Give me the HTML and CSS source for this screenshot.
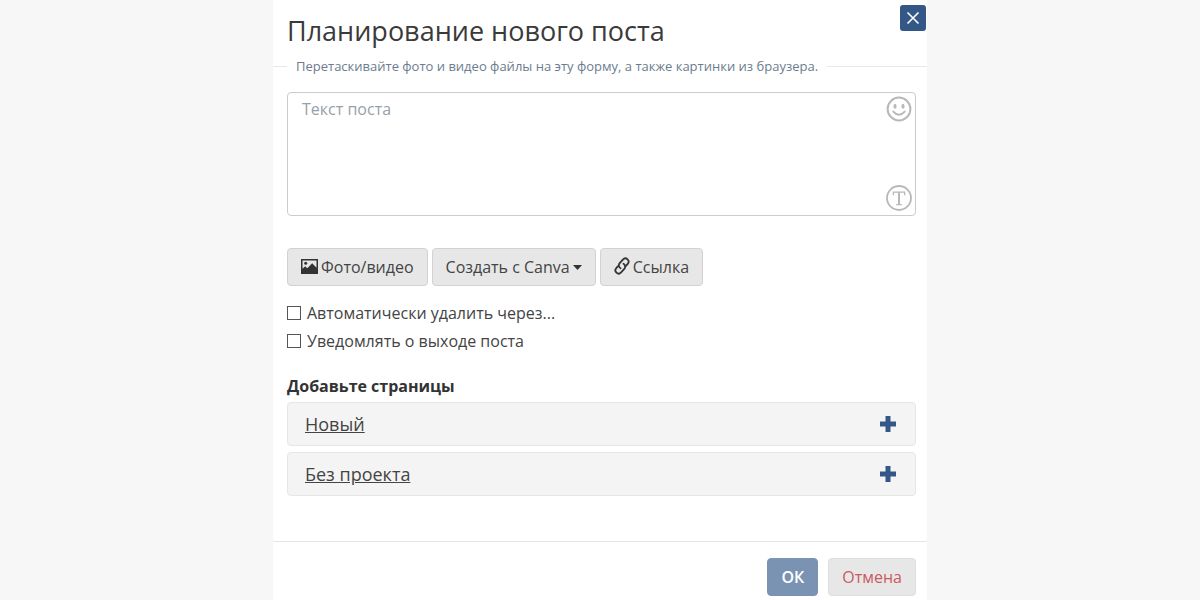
FILE: index.html
```html
<!DOCTYPE html>
<html lang="ru">
<head>
<meta charset="utf-8">
<meta name="viewport" content="width=device-width, initial-scale=1">
<title>Планирование нового поста</title>
<link rel="stylesheet" href="styles.css">
</head>
<body>
<form class="dialog">
  <header class="header">
    <h1 class="title">Планирование нового поста</h1>
    <button class="close" type="button" aria-label="Закрыть">
      <svg width="14" height="14" viewBox="0 0 14 14"><path d="M1.500 1.500l11 11M12.500 1.500l-11 11" fill="none" stroke="currentColor" stroke-width="1.600"/></svg>
    </button>
  </header>
  <p class="hint">Перетаскивайте фото и видео файлы на эту форму, а также картинки из браузера.</p>

  <div class="content">
    <div class="editor">
      <textarea class="editor-text" placeholder="Текст поста" aria-label="Текст поста"></textarea>
      <div class="editor-tools">
        <button class="tool" type="button" aria-label="Смайлики">
          <svg width="26" height="26" viewBox="0 0 26 26"><circle cx="13" cy="13" r="11.400" fill="none" stroke="currentColor" stroke-width="2"/><ellipse cx="9" cy="10.300" rx="1.500" ry="2.500" fill="currentColor"/><ellipse cx="17" cy="10.300" rx="1.500" ry="2.500" fill="currentColor"/><path d="M7.300 15.600q5.700 6.200 11.400 0" fill="none" stroke="currentColor" stroke-width="2" stroke-linecap="round"/></svg>
        </button>
        <button class="tool" type="button" aria-label="Форматирование текста">
          <svg width="26" height="26" viewBox="0 0 26 26"><circle cx="13" cy="13" r="12" fill="none" stroke="currentColor" stroke-width="1.800"/><path d="M7.400 10.300V7.200h11.200v3.100M10.200 19.600h5.600" fill="none" stroke="currentColor" stroke-width="1.300"/><path d="M13 7.200v12" stroke="currentColor" stroke-width="2"/></svg>
        </button>
      </div>
    </div>

    <div class="actions">
      <button class="button" type="button">
        <svg width="17" height="16" viewBox="0 0 17 16"><path fill="currentColor" fill-rule="evenodd" d="M0 0h17v15H0zM1.500 1.500v8.300l2.700-2.600 2 2 1.600-1.400 3.400-3.500 4.300 4.500V1.500z"/><circle cx="4.700" cy="4.300" r="1.500" fill="currentColor"/></svg>
        <span>Фото/видео</span>
      </button>
      <button class="button" type="button">
        <span>Создать с Canva</span>
        <svg width="9" height="5" viewBox="0 0 9 5"><path d="M0 0h9L4.500 5z" fill="currentColor"/></svg>
      </button>
      <button class="button" type="button">
        <svg width="16" height="20" viewBox="0 0 16 20"><g fill="none" stroke="currentColor" stroke-width="1.800" stroke-linecap="round" stroke-linejoin="round"><path d="M6.500 11.200C4.500 10 4.400 7.600 5.700 6.100L8.900 2.600C10.200 1.200 12.200 1.100 13.500 2.300S14.900 5.500 13.700 6.900L12 8.800"/><path d="M9.500 6.800C11.500 8 11.600 10.400 10.300 11.900L7.100 15.400C5.800 16.800 3.800 16.900 2.500 15.700S1.100 12.500 2.300 11.100L4 9.200"/></g></svg>
        <span>Ссылка</span>
      </button>
    </div>

    <div class="options">
      <label class="option"><input class="check" type="checkbox"><span>Автоматически удалить через...</span></label>
      <label class="option"><input class="check" type="checkbox"><span>Уведомлять о выходе поста</span></label>
    </div>

    <h2 class="subtitle">Добавьте страницы</h2>
    <div class="projects">
      <div class="project">
        <a class="project-name" href="#new">Новый</a>
        <button class="add" type="button" aria-label="Добавить: Новый"><svg width="16" height="16" viewBox="0 0 16 16"><path d="M5.500 0h5v5.500H16v5h-5.500V16h-5v-5.500H0v-5h5.500z" fill="currentColor"/></svg></button>
      </div>
      <div class="project">
        <a class="project-name" href="#none">Без проекта</a>
        <button class="add" type="button" aria-label="Добавить: Без проекта"><svg width="16" height="16" viewBox="0 0 16 16"><path d="M5.500 0h5v5.500H16v5h-5.500V16h-5v-5.500H0v-5h5.500z" fill="currentColor"/></svg></button>
      </div>
    </div>
  </div>

  <footer class="footer">
    <button class="button primary" type="submit">ОК</button>
    <button class="button cancel" type="button">Отмена</button>
  </footer>
</form>
</body>
</html>
```
FILE: styles.css
```css
* {
  box-sizing: border-box;
}

body {
  margin: 0;
  background: #f7f7f7;
  color: #444;
  font: 16px/24px "Open Sans", "Noto Sans", sans-serif;
}

svg {
  display: block;
  flex: none;
}

button {
  font: inherit;
  cursor: pointer;
}

.dialog {
  display: flex;
  flex-direction: column;
  max-width: 654px;
  min-height: 100vh;
  margin: 0 auto;
  background: #fff;
}

.header {
  display: flex;
  justify-content: space-between;
  align-items: flex-start;
  padding: 5px 1px 0 14px;
}

.title {
  margin: 8px 0 0;
  font-size: 27px;
  line-height: 36px;
  font-weight: 400;
  color: #3a3a3a;
}

.close {
  display: grid;
  place-items: center;
  width: 26px;
  height: 26px;
  padding: 0;
  border: 0;
  border-radius: 3px;
  background: #335887;
  color: #fff;
}

.hint {
  display: flex;
  align-items: center;
  gap: 9px;
  margin: 7px 0 16px;
  font-size: 13px;
  line-height: 20px;
  color: #6c7c8e;
}

.hint::before,
.hint::after {
  content: "";
  height: 1px;
  background: #e8e8e8;
}

.hint::before {
  width: 14px;
}

.hint::after {
  flex: 1;
}

.content {
  padding: 0 11px 0 14px;
}

.editor {
  position: relative;
}

.editor-text {
  display: block;
  width: 100%;
  height: 124px;
  padding: 4px 36px 4px 14px;
  border: 1px solid #ccc;
  border-radius: 4px;
  background: #fff;
  color: inherit;
  font: inherit;
  resize: none;
}

.editor-text::placeholder {
  color: #98a0a7;
  opacity: 1;
}

.editor-tools {
  position: absolute;
  top: 4px;
  right: 4px;
  bottom: 5px;
  display: flex;
  flex-direction: column;
  justify-content: space-between;
}

.tool,
.add {
  padding: 0;
  border: 0;
  background: none;
  color: #b8b8b8;
}

.actions {
  display: flex;
  flex-wrap: wrap;
  gap: 4px;
  margin-top: 32px;
}

.button {
  display: flex;
  align-items: center;
  gap: 3px;
  padding: 6px 13px;
  border: 1px solid #d2d2d2;
  border-radius: 4px;
  background: #e7e7e7;
  color: #444;
}

.button svg {
  color: #333;
}

.options {
  display: grid;
  gap: 4px;
  margin-top: 15px;
}

.option {
  display: flex;
  align-items: center;
  gap: 6px;
}

.check {
  appearance: none;
  flex: none;
  width: 14px;
  height: 14px;
  margin: 0;
  border: 1px solid #555;
  background: #fff;
}

.check:checked {
  background: #335887;
}

.subtitle {
  margin: 21px 0 4px;
  font-size: 16px;
  line-height: 24px;
  font-weight: 700;
  color: #333;
}

.projects {
  display: grid;
  gap: 6px;
}

.project {
  display: flex;
  justify-content: space-between;
  align-items: center;
  padding: 9px 19px 9px 17px;
  border: 1px solid #e6e6e6;
  border-radius: 4px;
  background: #f4f4f4;
}

.project-name {
  font-size: 18px;
  color: #444;
}

.add {
  color: #335887;
}

.footer {
  display: flex;
  justify-content: flex-end;
  gap: 10px;
  margin-top: auto;
  padding: 16px 11px 4px;
  border-top: 1px solid #e5e5e5;
}

.primary {
  border-color: #7b93b3;
  background: #7b93b3;
  color: #fff;
  font-weight: 600;
}

.cancel {
  border-color: #dedede;
  color: #cc5a60;
}
```
